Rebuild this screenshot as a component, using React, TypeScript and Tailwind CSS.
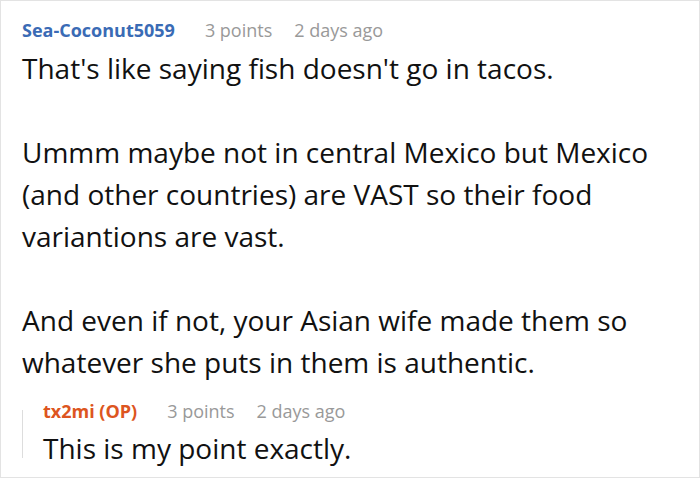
import React from 'react';

const Meta = ({ points, time }: { points: string; time: string }) => (
  <>
    <span className="ml-[30px] text-[#999999]">{points}</span>
    <span className="ml-[22px] text-[#999999]">{time}</span>
  </>
);

export default function App() {
  return (
    <div
      className="w-[700px] h-[478px] border border-[#e3e3e3] bg-white overflow-hidden"
      style={{ fontFamily: '"Open Sans", "Noto Sans", sans-serif' }}
    >
      <div className="pl-[21px] pr-[18px] pt-[17px]">
        <div className="flex items-center text-[18px] leading-[24px]">
          <span className="font-bold text-[#3a6bb5]">Sea-Coconut5059</span>
          <Meta points="3 points" time="2 days ago" />
        </div>

        <div className="mt-[5px] text-[28px] leading-[42px] text-[#111111]">
          <p>That's like saying fish doesn't go in tacos.</p>
          <p className="mt-[42px]">
            Ummm maybe not in central Mexico but Mexico (and other countries) are VAST so their food
            variantions are vast.
          </p>
          <p className="mt-[42px]">
            And even if not, your Asian wife made them so whatever she puts in them is authentic.
          </p>
        </div>

        <div className="mt-[16px] flex">
          <div className="w-px bg-[#dddddd] my-[11px]" />
          <div className="pl-[20px]">
            <div className="flex items-center text-[18px] leading-[24px]">
              <span className="font-bold text-[#dd5520]">tx2mi (OP)</span>
              <Meta points="3 points" time="2 days ago" />
            </div>
            <p className="mt-[4px] text-[28px] leading-[42px] text-[#111111]">
              This is my point exactly.
            </p>
          </div>
        </div>
      </div>
    </div>
  );
}
